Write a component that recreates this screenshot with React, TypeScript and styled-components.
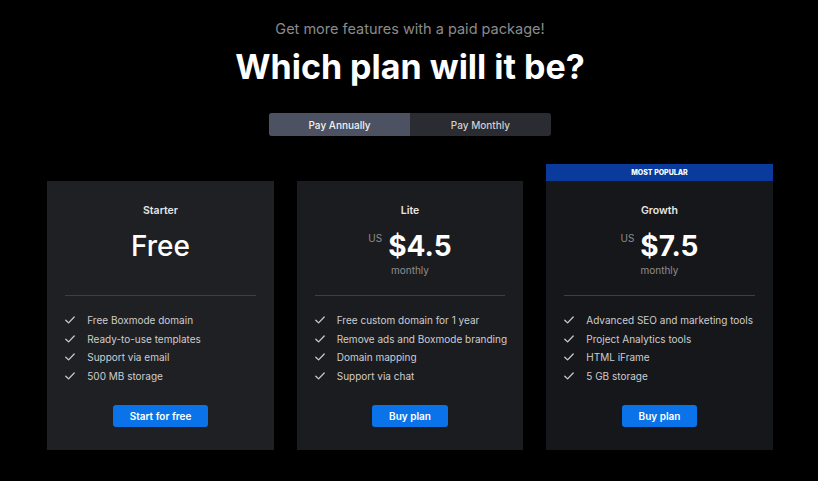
import React from "react";
import styled, { createGlobalStyle } from "styled-components";

const GlobalStyle = createGlobalStyle`
  html, body {
    margin: 0;
    padding: 0;
    background: #000;
  }
  body {
    font-family: Inter, "Noto Sans", sans-serif;
    color: #fff;
  }
`;

const Page = styled.div`
  width: 818px;
  height: 481px;
  display: flex;
  flex-direction: column;
  align-items: center;
  padding: 19px 0 0 2px;
  box-sizing: border-box;
`;

const Subtitle = styled.div`
  font-size: 14.5px;
  line-height: 20px;
  color: #8b8b8b;
`;

const Headline = styled.h1`
  margin: 7px 0 0;
  font-size: 34px;
  line-height: 42px;
  font-weight: 700;
`;

const Toggle = styled.div`
  margin-top: 25px;
  display: flex;
  width: 282px;
  height: 23px;
  border-radius: 3px;
  overflow: hidden;
  background: #2a2c32;
`;

const ToggleOption = styled.div<{ $active?: boolean }>`
  flex: 1;
  display: flex;
  align-items: center;
  justify-content: center;
  font-size: 10px;
  font-weight: 500;
  color: ${(p) => (p.$active ? "#f2f2f2" : "#cfcfd2")};
  background: ${(p) => (p.$active ? "#4c5261" : "transparent")};
`;

const Plans = styled.div`
  margin-top: 28px;
  display: flex;
  align-items: flex-end;
  gap: 23px;
`;

const PlanColumn = styled.div`
  width: 226.5px;
  display: flex;
  flex-direction: column;
`;

const Banner = styled.div`
  height: 17px;
  display: flex;
  align-items: center;
  justify-content: center;
  background: #0a3b9c;
  font-size: 7px;
  font-weight: 800;
  color: #fff;
`;

const Card = styled.div<{ $bg: string }>`
  height: 269px;
  box-sizing: border-box;
  padding: 23px 18px 0;
  background: ${(p) => p.$bg};
  display: flex;
  flex-direction: column;
  align-items: stretch;
`;

const PlanName = styled.div`
  text-align: center;
  font-size: 10.5px;
  line-height: 14px;
  font-weight: 600;
  color: #e6e6e6;
`;

const PriceBlock = styled.div`
  margin-top: 11px;
  height: 48px;
  display: flex;
  flex-direction: column;
  align-items: center;
`;

const PriceRow = styled.div`
  display: flex;
  align-items: flex-start;
  gap: 6px;
`;

const Currency = styled.span`
  font-size: 10px;
  line-height: 10px;
  margin-top: 4px;
  color: #8e8e8e;
`;

const Amount = styled.span<{ $weight: number }>`
  font-size: 28px;
  line-height: 34px;
  font-weight: ${(p) => p.$weight};
  color: #fff;
`;

const Period = styled.div`
  font-size: 10px;
  line-height: 14px;
  color: #8e8e8e;
`;

const Divider = styled.hr`
  margin: 18px 0 0;
  border: none;
  height: 1px;
  background: #3d3f44;
`;

const Features = styled.ul`
  list-style: none;
  margin: 15px 0 0;
  padding: 0;
`;

const Feature = styled.li`
  display: flex;
  align-items: center;
  gap: 12px;
  height: 18.6px;
  font-size: 10px;
  white-space: nowrap;
  color: #cdcdcf;
`;

const ButtonRow = styled.div`
  margin-top: 20px;
  display: flex;
  justify-content: center;
`;

const BuyButton = styled.button`
  height: 22px;
  padding: 0 17px;
  border: none;
  border-radius: 3px;
  background: #0b73ea;
  color: #fff;
  font-family: inherit;
  font-size: 10px;
  font-weight: 600;
  cursor: pointer;
`;

const CheckIcon = () => (
  <svg width="10" height="8" viewBox="0 0 10 8" fill="none" style={{ flexShrink: 0 }}>
    <path d="M0.8 4.2L3.6 6.9L9.2 1" stroke="#c9c9cc" strokeWidth="1.3" strokeLinecap="round" strokeLinejoin="round" />
  </svg>
);

type Plan = {
  name: string;
  price: string;
  currency?: string;
  period?: string;
  features: string[];
  cta: string;
  bg: string;
  popular?: boolean;
};

const plans: Plan[] = [
  {
    name: "Starter",
    price: "Free",
    features: ["Free Boxmode domain", "Ready-to-use templates", "Support via email", "500 MB storage"],
    cta: "Start for free",
    bg: "#1f2024",
  },
  {
    name: "Lite",
    price: "$4.5",
    currency: "US",
    period: "monthly",
    features: ["Free custom domain for 1 year", "Remove ads and Boxmode branding", "Domain mapping", "Support via chat"],
    cta: "Buy plan",
    bg: "#1b1c20",
  },
  {
    name: "Growth",
    price: "$7.5",
    currency: "US",
    period: "monthly",
    features: ["Advanced SEO and marketing tools", "Project Analytics tools", "HTML iFrame", "5 GB storage"],
    cta: "Buy plan",
    bg: "#16171b",
    popular: true,
  },
];

const PlanCard = ({ plan }: { plan: Plan }) => (
  <PlanColumn>
    {plan.popular && <Banner>MOST POPULAR</Banner>}
    <Card $bg={plan.bg}>
      <PlanName>{plan.name}</PlanName>
      <PriceBlock>
        <PriceRow>
          {plan.currency && <Currency>{plan.currency}</Currency>}
          <Amount $weight={plan.currency ? 700 : 500}>{plan.price}</Amount>
        </PriceRow>
        {plan.period && <Period>{plan.period}</Period>}
      </PriceBlock>
      <Divider />
      <Features>
        {plan.features.map((f) => (
          <Feature key={f}>
            <CheckIcon />
            {f}
          </Feature>
        ))}
      </Features>
      <ButtonRow>
        <BuyButton>{plan.cta}</BuyButton>
      </ButtonRow>
    </Card>
  </PlanColumn>
);

const App = () => (
  <>
    <GlobalStyle />
    <Page>
      <Subtitle>Get more features with a paid package!</Subtitle>
      <Headline>Which plan will it be?</Headline>
      <Toggle>
        <ToggleOption $active>Pay Annually</ToggleOption>
        <ToggleOption>Pay Monthly</ToggleOption>
      </Toggle>
      <Plans>
        {plans.map((p) => (
          <PlanCard key={p.name} plan={p} />
        ))}
      </Plans>
    </Page>
  </>
);

export default App;
